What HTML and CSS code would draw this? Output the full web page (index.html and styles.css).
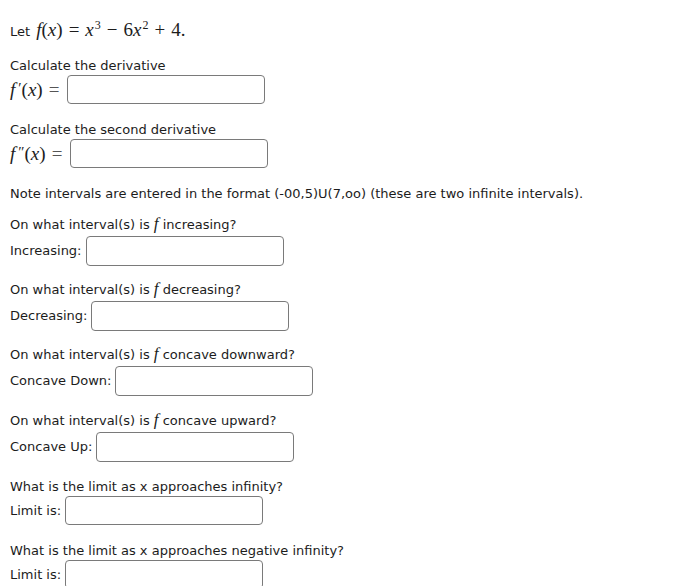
FILE: index.html
```html
<!DOCTYPE html>
<html lang="en">
<head>
    <meta charset="UTF-8">
    <meta name="viewport" content="width=device-width, initial-scale=1.0">
    <title>Function analysis</title>
    <link rel="stylesheet" href="styles.css">
</head>
<body>
    <div class="problem">
        <p class="intro">Let <span class="math">f<span class="up">(</span>x<span class="up">)</span><span class="op">=</span>x<sup>3</sup><span class="op">&minus;</span><span class="up">6</span>x<sup>2</sup><span class="op">+</span><span class="up">4.</span></span></p>

        <p class="q gap-a">Calculate the derivative</p>
        <div class="row tight">
            <span class="math">f<span class="up pr">&prime;</span><span class="up">(</span>x<span class="up">)</span><span class="op eq">=</span></span>
            <input type="text" class="answer short">
        </div>

        <p class="q gap-b">Calculate the second derivative</p>
        <div class="row tight">
            <span class="math">f<span class="up pr">&Prime;</span><span class="up">(</span>x<span class="up">)</span><span class="op eq">=</span></span>
            <input type="text" class="answer short">
        </div>

        <p class="q gap-b">Note intervals are entered in the format (-00,5)U(7,oo) (these are two infinite intervals).</p>

        <p class="q gap-c">On what interval(s) is <span class="mf">f</span> increasing?</p>
        <div class="row">
            <label>Increasing:</label>
            <input type="text" class="answer">
        </div>

        <p class="q gap-a">On what interval(s) is <span class="mf">f</span> decreasing?</p>
        <div class="row">
            <label>Decreasing:</label>
            <input type="text" class="answer">
        </div>

        <p class="q gap-a">On what interval(s) is <span class="mf">f</span> concave downward?</p>
        <div class="row">
            <label>Concave Down:</label>
            <input type="text" class="answer">
        </div>

        <p class="q gap-d">On what interval(s) is <span class="mf">f</span> concave upward?</p>
        <div class="row">
            <label>Concave Up:</label>
            <input type="text" class="answer">
        </div>

        <p class="q gap-d">What is the limit as x approaches infinity?</p>
        <div class="row tight">
            <label>Limit is:</label>
            <input type="text" class="answer short">
        </div>

        <p class="q gap-b">What is the limit as x approaches negative infinity?</p>
        <div class="row tight">
            <label>Limit is:</label>
            <input type="text" class="answer short">
        </div>
    </div>
</body>
</html>
```

FILE: styles.css
```css
* {
    margin: 0;
    padding: 0;
    box-sizing: border-box;
}
body {
    background-color: #fff;
    color: #1c1c1c;
    font-family: "DejaVu Sans", Verdana, sans-serif;
    font-size: 13px;
}
.problem {
    padding: 20px 10px 0 10px;
}
.q, .intro {
    line-height: 20px;
}
.gap-a { margin-top: 14px; }
.gap-b { margin-top: 16px; }
.gap-c { margin-top: 11px; }
.gap-d { margin-top: 15px; }
.math {
    font-family: "Liberation Serif", "DejaVu Serif", serif;
    font-style: italic;
    font-size: 19px;
    line-height: 1;
    padding-left: 2px;
}
.math .up, .math .op {
    font-style: normal;
}
.math .pr {
    font-size: 15px;
    vertical-align: 3px;
    margin-left: 3px;
}
.math .op {
    margin: 0 6px;
}
.math sup {
    font-size: 12px;
    font-style: normal;
    line-height: 0;
    margin-left: 1px;
}
.eq {
    color: #555;
}
.row .math .op {
    margin-right: 4px;
}
.mf {
    font-family: "Liberation Serif", "DejaVu Serif", serif;
    font-style: italic;
    font-size: 17px;
    line-height: 1;
}
.row {
    display: flex;
    align-items: center;
    gap: 4px;
    margin-top: 1px;
    line-height: 20px;
}
.row .math {
    padding-left: 0;
}
.row.tight {
    margin-top: -1px;
}
.answer {
    width: 198px;
    height: 30px;
    border: 1px solid #7a7a7a;
    border-radius: 4px;
    background-color: #fff;
}
.answer.short {
    height: 29px;
}
```
